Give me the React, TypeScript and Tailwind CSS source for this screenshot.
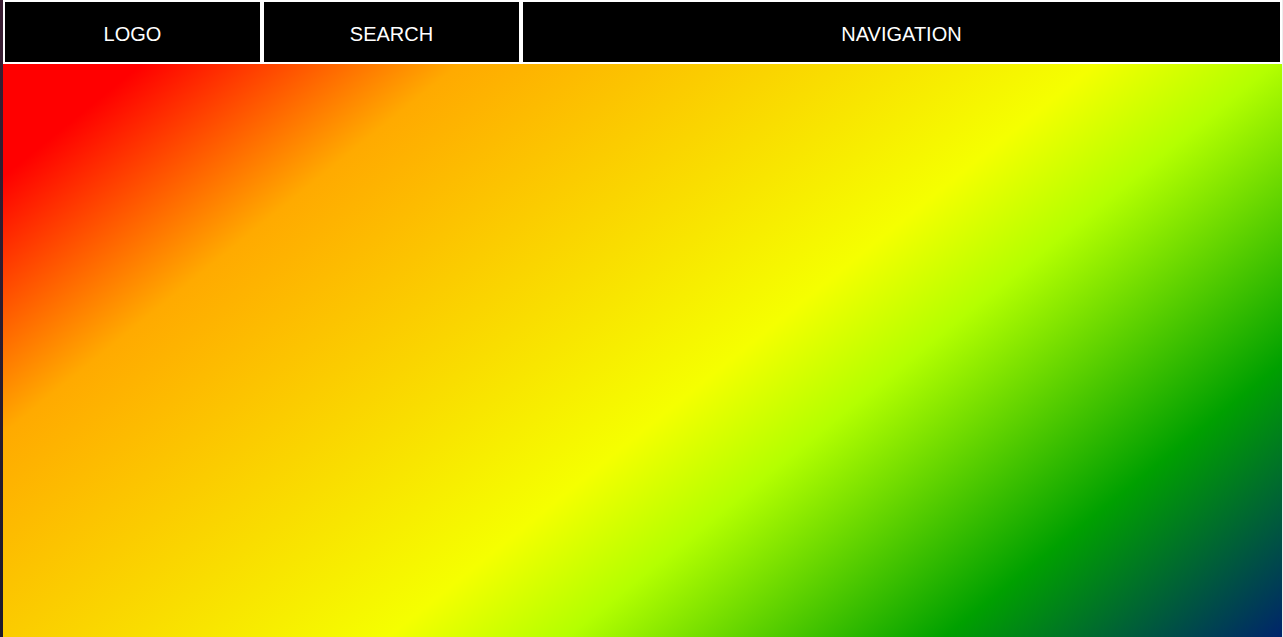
export default function App() {
  const sections = [
    { label: 'LOGO', width: 'w-[259px]' },
    { label: 'SEARCH', width: 'w-[259px]' },
    { label: 'NAVIGATION', width: 'flex-1' },
  ]

  return (
    <div className="flex h-[637px] w-[1283px] overflow-hidden font-['Liberation_Sans',Arial,sans-serif]">
      {/* thin dark strip on the left edge */}
      <div className="w-[3px] shrink-0 bg-[linear-gradient(to_bottom,#3b1e33,#1d1a2b)]" />

      <div className="flex flex-1 flex-col">
        <header className="flex h-[64px] shrink-0 bg-white">
          {sections.map((s) => (
            <div
              key={s.label}
              className={`${s.width} flex items-center justify-center border-2 border-white bg-black pt-[3px] text-[20px] text-white`}
            >
              {s.label}
            </div>
          ))}
        </header>

        <main className="flex-1 bg-[linear-gradient(141deg,#ff0000_7%,#ffaa00_23%,#f5ff00_55%,#b4ff00_64%,#00a000_83%,#00246b_100%)]" />
      </div>

      <div className="w-px shrink-0 bg-[#ececec]" />
    </div>
  )
}
